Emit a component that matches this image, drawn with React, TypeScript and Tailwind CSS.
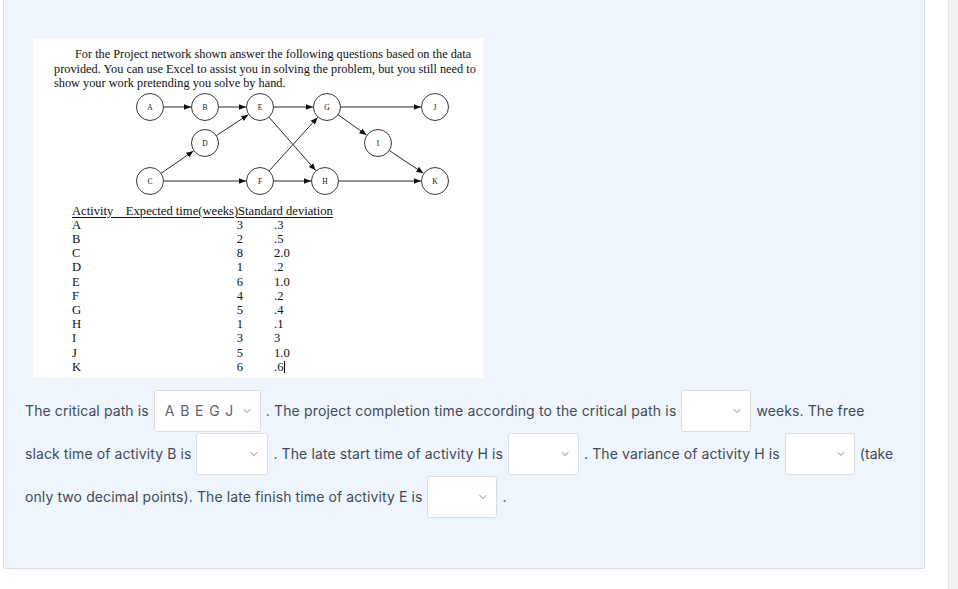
import { ChevronDown } from "lucide-react";

type Node = { id: string; x: number; y: number };

const nodes: Node[] = [
  { id: "A", x: 117, y: 16 },
  { id: "B", x: 172, y: 16 },
  { id: "E", x: 227, y: 16 },
  { id: "G", x: 294, y: 16 },
  { id: "J", x: 402, y: 16 },
  { id: "D", x: 172, y: 52 },
  { id: "I", x: 345, y: 52 },
  { id: "C", x: 117, y: 90 },
  { id: "F", x: 227, y: 90 },
  { id: "H", x: 292, y: 90 },
  { id: "K", x: 402, y: 90 },
];

const edges: [string, string][] = [
  ["A", "B"],
  ["B", "E"],
  ["D", "E"],
  ["E", "G"],
  ["G", "J"],
  ["C", "D"],
  ["C", "F"],
  ["E", "H"],
  ["F", "G"],
  ["F", "H"],
  ["G", "I"],
  ["I", "K"],
  ["H", "K"],
];

const R = 13.5;

function Network() {
  const at = (id: string) => nodes.find((n) => n.id === id)!;
  return (
    <svg className="block" width="450" height="110" viewBox="0 0 450 110">
      <defs>
        <marker id="arr" viewBox="0 0 10 10" refX="10" refY="5" markerWidth="8" markerHeight="8" orient="auto">
          <path d="M0 1 L10 5 L0 9 Z" fill="#111" />
        </marker>
      </defs>
      {edges.map(([a, b]) => {
        const p = at(a);
        const q = at(b);
        const dx = q.x - p.x;
        const dy = q.y - p.y;
        const len = Math.hypot(dx, dy);
        const ux = dx / len;
        const uy = dy / len;
        return (
          <line
            key={a + b}
            x1={p.x + ux * R}
            y1={p.y + uy * R}
            x2={q.x - ux * (R + 0.5)}
            y2={q.y - uy * (R + 0.5)}
            stroke="#111"
            strokeWidth="0.9"
            markerEnd="url(#arr)"
          />
        );
      })}
      {nodes.map((n) => (
        <g key={n.id}>
          <circle cx={n.x} cy={n.y} r={R} fill="white" stroke="#222" strokeWidth="0.9" />
          <text x={n.x} y={n.y + 2.6} textAnchor="middle" fontSize="7.5" fontFamily="'Liberation Serif', serif" fill="#111">
            {n.id}
          </text>
        </g>
      ))}
    </svg>
  );
}

const rows: [string, string, string][] = [
  ["A", "3", ".3"],
  ["B", "2", ".5"],
  ["C", "8", "2.0"],
  ["D", "1", ".2"],
  ["E", "6", "1.0"],
  ["F", "4", ".2"],
  ["G", "5", ".4"],
  ["H", "1", ".1"],
  ["I", "3", "3"],
  ["J", "5", "1.0"],
  ["K", "6", ".6"],
];

function DataTable() {
  return (
    <div className="pl-[39px] font-['Liberation_Serif',serif] text-[12.6px] leading-[14.2px] text-[#111]">
      <div className="whitespace-pre underline decoration-[0.8px] underline-offset-[2px]">
        {"Activity    Expected time(weeks)Standard deviation"}
      </div>
      {rows.map(([a, t, s], i) => (
        <div key={a} className="flex">
          <span className="w-[160px]">{a}</span>
          <span className="w-[16px] text-center">{t}</span>
          <span className="ml-[26px]">
            {s}
            {i === rows.length - 1 && <span className="ml-[1px] inline-block h-[12px] w-px bg-[#111] align-[-2px]" />}
          </span>
        </div>
      ))}
    </div>
  );
}

function Select({ w, value }: { w: number; value?: string }) {
  return (
    <span
      className="mx-[5px] inline-flex h-[42px] shrink-0 items-center justify-between rounded-[3px] border border-[#d9dee5] bg-white pl-[10px] pr-[7px]"
      style={{ width: w }}
    >
      <span className="tracking-[0.9px] text-[#5d646e]">{value ?? ""}</span>
      <ChevronDown size={12} strokeWidth={2} className="text-[#7b828c]" />
    </span>
  );
}

function Line({ children }: { children: React.ReactNode }) {
  return <div className="flex h-[43px] items-center whitespace-pre">{children}</div>;
}

export default function App() {
  return (
    <div className="flex h-[589px] w-full bg-white">
      <div className="ml-[3px] h-[569px] w-[922px] rounded-b-[3px] border border-t-0 border-[#d6dee8] bg-[#eef5fd] pl-[21px] pt-[38px]">
        <div className="ml-[8px] h-[340px] w-[450px] bg-white pt-[9px]">
          <div className="pl-[21px] font-['Liberation_Serif',serif] text-[12.3px] leading-[14.5px] text-[#111]">
            <div className="pl-[21px]">For the Project network shown answer the following questions based on the data</div>
            <div>provided. You can use Excel to assist you in solving the problem, but you still need to</div>
            <div>show your work pretending you solve by hand.</div>
          </div>
          <Network />
          <div className="mt-[3px]">
            <DataTable />
          </div>
        </div>
        <div className="mt-[11px] font-['Inter',sans-serif] text-[14px] tracking-[0.1px] text-[#434a55]">
          <Line>
            The critical path is
            <Select w={107} value="A B E G J" />
            <span className="tracking-[0.15px]">. The project completion time according to the critical path is</span>
            <Select w={70} />
            weeks. The free
          </Line>
          <Line>
            slack time of activity B is
            <Select w={72} />
            . The late start time of activity H is
            <Select w={71} />
            . The variance of activity H is
            <Select w={70} />
            (take
          </Line>
          <Line>
            only two decimal points). The late finish time of activity E is
            <Select w={70} />.
          </Line>
        </div>
      </div>
      <div className="ml-auto h-full w-[10px] border-l border-[#e2e2e2] bg-[#f1f1f1]" />
    </div>
  );
}
